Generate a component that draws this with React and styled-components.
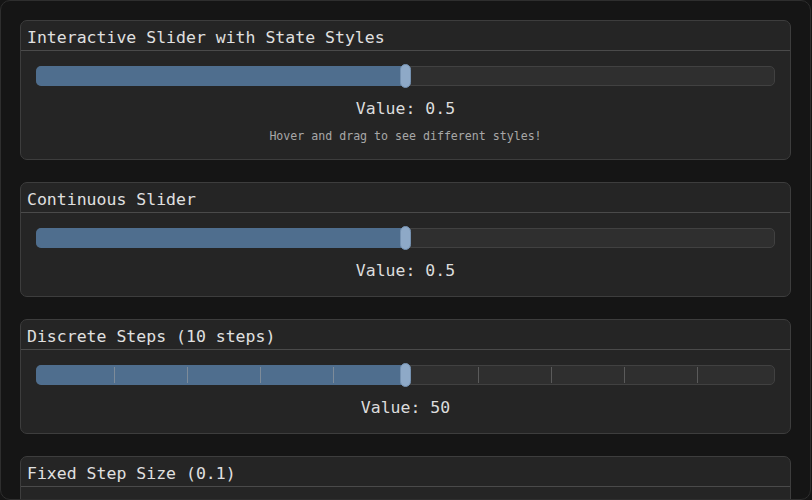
import React, { useRef, useState } from 'react';
import styled, { createGlobalStyle } from 'styled-components';

const GlobalStyle = createGlobalStyle`
  html, body {
    margin: 0;
    padding: 0;
    background: #151515;
    overflow: hidden;
  }
  * { box-sizing: border-box; }
`;

const Window = styled.div`
  width: 811px;
  height: 500px;
  background: #151515;
  border: 1px solid #2e2e2e;
  border-radius: 10px;
  padding: 19px 19px 0 19px;
  display: flex;
  flex-direction: column;
  gap: 22px;
  overflow: hidden;
  font-family: "DejaVu Sans Mono", "Liberation Mono", monospace;
  color: #dcdcdc;
`;

const Panel = styled.section`
  flex-shrink: 0;
  background: #252525;
  border: 1px solid #3d3d3d;
  border-radius: 7px;
`;

const Header = styled.div`
  height: 30px;
  padding: 3px 6px 0;
  border-bottom: 1px solid #4a4a4a;
  display: flex;
  align-items: center;
  font-size: 16.5px;
  color: #e0e0e0;
`;

const Body = styled.div`
  padding: 15px 15px 15px;
  display: flex;
  flex-direction: column;
  align-items: stretch;
`;

const Track = styled.div`
  position: relative;
  height: 20px;
  background: #2f2f2f;
  border: 1px solid #414141;
  border-radius: 5px;
  cursor: pointer;
`;

const Fill = styled.div`
  position: absolute;
  left: -1px;
  top: -1px;
  bottom: -1px;
  background: #4f6e8e;
  border-radius: 5px 0 0 5px;
`;

const Tick = styled.div`
  position: absolute;
  top: 1px;
  bottom: 1px;
  width: 1px;
  background: ${p => (p.$filled ? '#7d8b99' : '#5a5a5a')};
`;

const Thumb = styled.div`
  position: absolute;
  top: -3px;
  width: 11px;
  height: 24px;
  margin-left: -5.5px;
  background: #8ea9c7;
  border: 1px solid #7591b0;
  border-radius: 6px;
`;

const Value = styled.div`
  margin-top: 13px;
  text-align: center;
  font-size: 16.5px;
  line-height: 20px;
  color: #dcdcdc;
`;

const Hint = styled.div`
  margin-top: 9px;
  text-align: center;
  font-size: 11.6px;
  line-height: 16px;
  color: #a8a8a8;
`;

const THUMB = 11;

function Slider({ value, onChange, steps }) {
  const ref = useRef(null);

  const setFromEvent = e => {
    const r = ref.current.getBoundingClientRect();
    let v = (e.clientX - r.left - THUMB / 2) / (r.width - THUMB);
    v = Math.min(1, Math.max(0, v));
    if (steps) v = Math.round(v * steps) / steps;
    onChange(v);
  };

  const onDown = e => {
    setFromEvent(e);
    const move = ev => setFromEvent(ev);
    const up = () => {
      window.removeEventListener('pointermove', move);
      window.removeEventListener('pointerup', up);
    };
    window.addEventListener('pointermove', move);
    window.addEventListener('pointerup', up);
  };

  // thumb centre for a fraction f, measured inside the track border
  const pos = f => `calc(${THUMB / 2 - 1}px + (100% - ${THUMB}px + 2px) * ${f})`;

  const ticks = [];
  if (steps) {
    for (let i = 1; i < steps; i++) {
      ticks.push(<Tick key={i} $filled={i / steps < value} style={{ left: pos(i / steps) }} />);
    }
  }

  return (
    <Track ref={ref} onPointerDown={onDown}>
      <Fill style={{ width: `calc(${pos(value)} + 1px)` }} />
      {ticks}
      <Thumb style={{ left: pos(value) }} />
    </Track>
  );
}

export default function App() {
  const [a, setA] = useState(0.5);
  const [b, setB] = useState(0.5);
  const [c, setC] = useState(0.5);
  const [d, setD] = useState(0.5);

  return (
    <>
      <GlobalStyle />
      <Window>
        <Panel>
          <Header>Interactive Slider with State Styles</Header>
          <Body>
            <Slider value={a} onChange={setA} />
            <Value>Value: {a.toFixed(1)}</Value>
            <Hint>Hover and drag to see different styles!</Hint>
          </Body>
        </Panel>
        <Panel>
          <Header>Continuous Slider</Header>
          <Body>
            <Slider value={b} onChange={setB} />
            <Value>Value: {b.toFixed(1)}</Value>
          </Body>
        </Panel>
        <Panel>
          <Header>Discrete Steps (10 steps)</Header>
          <Body>
            <Slider value={c} onChange={setC} steps={10} />
            <Value>Value: {Math.round(c * 100)}</Value>
          </Body>
        </Panel>
        <Panel>
          <Header>Fixed Step Size (0.1)</Header>
          <Body>
            <Slider value={d} onChange={setD} steps={10} />
            <Value>Value: {d.toFixed(1)}</Value>
          </Body>
        </Panel>
      </Window>
    </>
  );
}
